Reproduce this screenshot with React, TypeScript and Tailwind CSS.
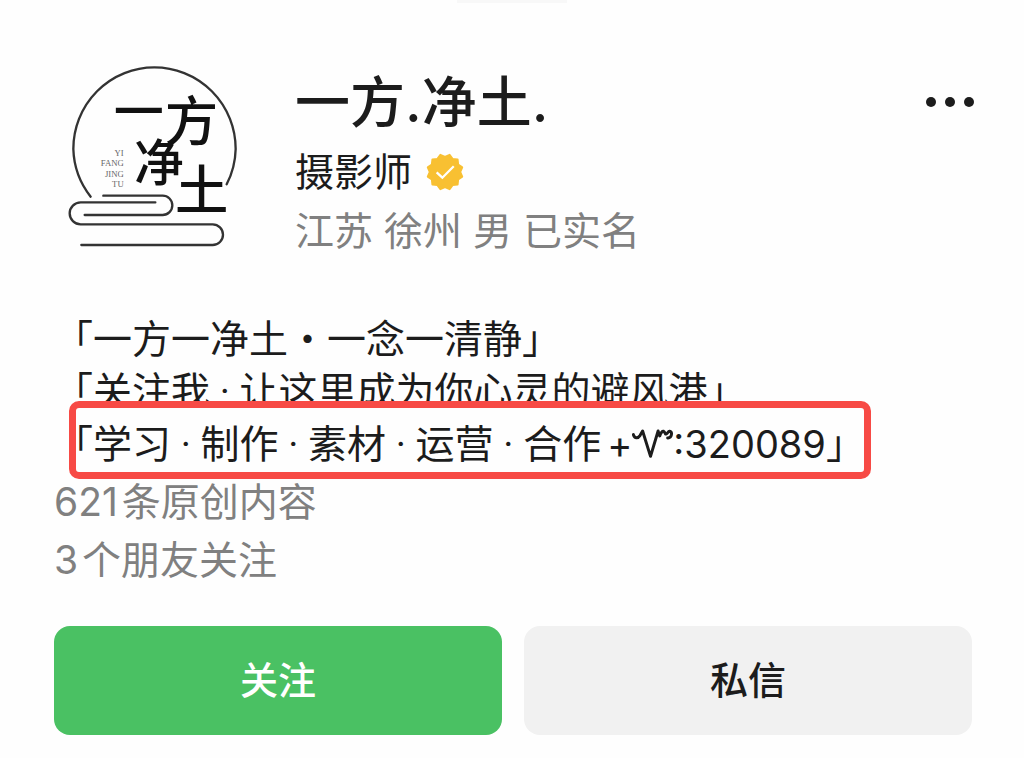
import { clsx } from 'clsx'

const bio = ['「一方一净土・一念一清静」', '「关注我 · 让这里成为你心灵的避风港」']
const stats = [
  { count: 621, label: '条原创内容' },
  { count: 3, label: '个朋友关注' },
]

function Avatar() {
  return (
    <svg viewBox="12 33 600 570" className="w-[200px] shrink-0" role="img" aria-label="一方净土">
      <g fill="none" stroke="#333" strokeWidth="7" strokeLinecap="round">
        <path d="M122 440A243 243 0 0 1 70 297A243 245 0 0 1 313 52A244 245 0 0 1 557 297A243 243 0 0 1 530 403" />
        <path d="M160 437H338a29 29 0 0 1 0 58H104" />
        <path d="M316 457H92a33 33 0 0 0 0 66H488a31 31 0 0 1 0 62H94" />
      </g>
      <g fill="#111" textAnchor="middle" className="font-['Noto_Sans_CJK_SC',sans-serif] font-medium">
        <text x="266" y="240" fontSize="150">一</text>
        <text x="424" y="272" fontSize="160">方</text>
        <text x="327" y="394" fontSize="150">净</text>
        <text x="455" y="480" fontSize="160">土</text>
      </g>
      <g fill="#666" textAnchor="end" fontSize="26" className="font-['Liberation_Serif',serif]">
        <text x="221" y="317">YI</text>
        <text x="221" y="347">FANG</text>
        <text x="221" y="381">JING</text>
        <text x="221" y="411">TU</text>
      </g>
    </svg>
  )
}

function VerifiedBadge() {
  // twelve rounded teeth around the disc
  const points = Array.from({ length: 24 }, (_, i) => {
    const r = i % 2 === 0 ? 47 : 40
    const a = (i * Math.PI) / 12 + Math.PI / 12
    return `${50 + r * Math.sin(a)},${50 - r * Math.cos(a)}`
  }).join(' ')
  return (
    <svg viewBox="0 0 100 100" className="size-[38px]" aria-hidden="true">
      <polygon points={points} fill="#f8c032" stroke="#f8c032" strokeWidth="5" strokeLinejoin="round" />
      <path d="M28 51L43 65L73 35" fill="none" stroke="#fff" strokeWidth="6" />
    </svg>
  )
}

function Flourish() {
  return (
    <svg viewBox="0 0 124 88" className="inline-block h-[29px] w-[41px] align-baseline" aria-hidden="true">
      <path
        d="M4 17C8 29 18 29 24 20L32 6L56 83L79 6L84 21C87 12 92 6 96 7C101 9 99 17 104 15C109 13 109 6 114 7C123 9 121 28 108 27"
        fill="none"
        stroke="#1c1c1c"
        strokeWidth="9"
        strokeLinejoin="round"
        strokeLinecap="round"
      />
    </svg>
  )
}

function ActionButton({ label, primary }: { label: string; primary?: boolean }) {
  return (
    <button
      type="button"
      className={clsx(
        'h-[109px] flex-1 rounded-2xl text-[38px] font-medium',
        primary ? 'bg-[#4ac163] text-white' : 'bg-[#f1f1f1] text-[#1c1c1c]',
      )}
    >
      {label}
    </button>
  )
}

export default function App() {
  return (
    <div className="min-h-screen bg-[#fefefe] font-['Inter','Noto_Sans_CJK_SC',sans-serif] text-[#1c1c1c]" lang="zh-CN">
      <div className="mx-auto h-[3px] w-[110px] bg-[#f8f8f8]" />
      <main className="pr-[52px] pl-[54px]">
        {/* ── Profile header ── */}
        <header className="flex items-start gap-[41px] pt-[58px]">
          <Avatar />
          <div className="min-w-0 flex-1">
            <h1 className="text-[55px] leading-[82px] font-medium">一方.净土.</h1>
            <div className="flex items-center gap-[14px] text-[39px] leading-[58px]">
              摄影师
              <VerifiedBadge />
            </div>
            <p className="text-[39px] leading-[60px] text-[#808080]">江苏 徐州 男 已实名</p>
          </div>
          <button type="button" aria-label="更多" className="mt-9 -mr-0.5 flex gap-[9px]">
            <span className="size-[10px] rounded-full bg-[#1c1c1c]" />
            <span className="size-[10px] rounded-full bg-[#1c1c1c]" />
            <span className="size-[10px] rounded-full bg-[#1c1c1c]" />
          </button>
        </header>

        {/* ── Bio ── */}
        <section className="mt-[53px] font-['Roboto','Noto_Sans_CJK_SC',sans-serif] text-[39px] leading-[52px] whitespace-nowrap">
          {bio.map(line => (
            <p key={line}>{line}</p>
          ))}
          <p className="relative w-fit">
            <span className="absolute -top-[17px] -right-1.5 -bottom-2 left-[15px] rounded-[10px] border-[7px] border-[#f74a45] bg-[#fefefe]" />
            <span className="relative">
              「学习 · 制作 · 素材 · 运营 · 合作
              <span className="ml-1.5 font-['Inter',sans-serif] text-[38px]">+<Flourish />:320089</span>」
            </span>
          </p>
        </section>

        <section className="mt-[2px] text-[39px] leading-[58px] text-[#808080]">
          {stats.map(({ count, label }) => (
            <p key={label}>
              <span className="mr-1">{count}</span>
              {label}
            </p>
          ))}
        </section>

        <div className="mt-[37px] flex gap-[22px] pb-[22px]">
          <ActionButton label="关注" primary />
          <ActionButton label="私信" />
        </div>
      </main>
    </div>
  )
}
